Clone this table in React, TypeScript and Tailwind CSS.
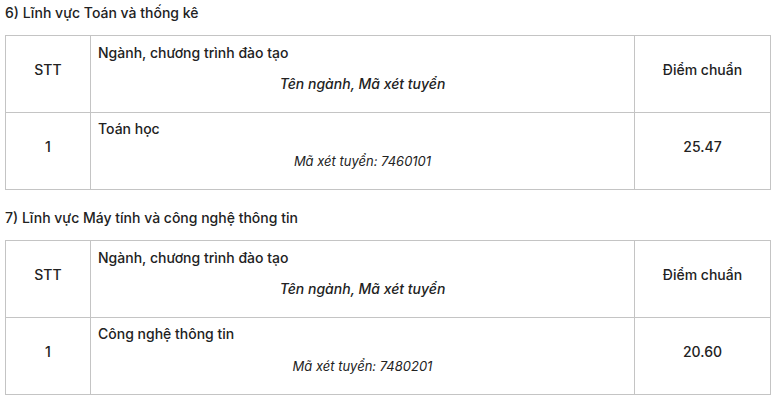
const sections = [
  {
    title: "6) Lĩnh vực Toán và thống kê",
    name: "Toán học",
    code: "7460101",
    score: "25.47",
  },
  {
    title: "7) Lĩnh vực Máy tính và công nghệ thông tin",
    name: "Công nghệ thông tin",
    code: "7480201",
    score: "20.60",
  },
];

function ScoreTable({ s }: { s: (typeof sections)[number] }) {
  return (
    <section>
      <h2 className="h-[26px] pl-[5px] text-[14px] font-medium leading-[26px] text-[#222]">
        {s.title}
      </h2>
      <table className="mt-[9px] ml-[5px] w-[765px] table-fixed border-collapse text-[14px] font-medium text-[#222]">
        <colgroup>
          <col className="w-[85px]" />
          <col className="w-[544px]" />
          <col className="w-[136px]" />
        </colgroup>
        <tbody>
          <tr className="h-[77px]">
            <td className="border border-[#c4c4c4] pb-[10px] text-center">STT</td>
            <td className="border border-[#c4c4c4] px-[7px] align-top">
              <p className="pt-[7px] leading-[20px]">Ngành, chương trình đào tạo</p>
              <p className="mt-[11px] text-center italic leading-[20px]">
                Tên ngành, Mã xét tuyển
              </p>
            </td>
            <td className="border border-[#c4c4c4] pb-[10px] text-center">Điểm chuẩn</td>
          </tr>
          <tr className="h-[77px]">
            <td className="border border-[#c4c4c4] pb-[10px] text-center">1</td>
            <td className="border border-[#c4c4c4] px-[7px] align-top">
              <p className="pt-[6px] leading-[20px]">{s.name}</p>
              <p className="mt-[12px] text-center text-[13px] font-normal italic leading-[20px]">
                Mã xét tuyển: {s.code}
              </p>
            </td>
            <td className="border border-[#c4c4c4] pb-[10px] text-center">{s.score}</td>
          </tr>
        </tbody>
      </table>
    </section>
  );
}

export default function App() {
  return (
    <div className="h-[401px] w-[777px] overflow-hidden bg-white font-['Inter','Noto_Sans',sans-serif]">
      <div className="flex flex-col gap-[15px]">
        {sections.map((s) => (
          <ScoreTable key={s.code} s={s} />
        ))}
      </div>
    </div>
  );
}
